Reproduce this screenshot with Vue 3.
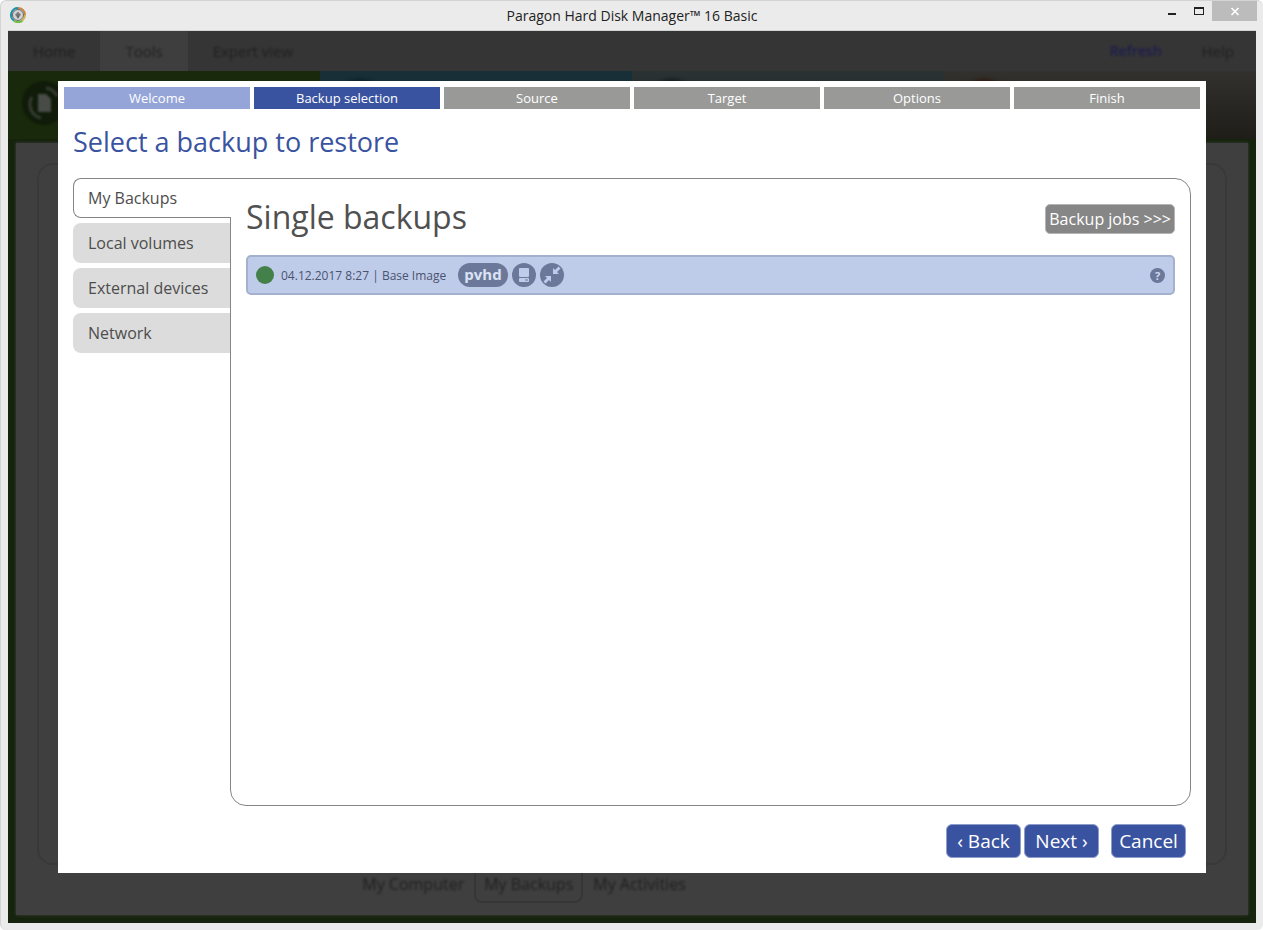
<script setup>
import { ref } from "vue";

const steps = [
	{ label: "Welcome", state: "done" },
	{ label: "Backup selection", state: "current" },
	{ label: "Source", state: "next" },
	{ label: "Target", state: "next" },
	{ label: "Options", state: "next" },
	{ label: "Finish", state: "next" },
];

const places = ["My Backups", "Local volumes", "External devices", "Network"];
const current_place = ref("My Backups");

const menu = ["Home", "Tools", "Expert view"];
const ribbon = ["green", "blue", "teal", "brown"];
const views = ["My Computer", "My Backups", "My Activities"];
</script>

<template>
	<div class="window">
		<header class="titlebar">
			<svg class="logo" viewBox="0 0 16 16" aria-hidden="true">
				<path d="M8 1A7 7 0 0 0 4 13.700" fill="none" stroke="#1c93a8" stroke-width="2" />
				<path d="M4 13.700A7 7 0 0 0 12.500 13.400" fill="none" stroke="#6dbb3a" stroke-width="2" />
				<path d="M12.500 13.400A7 7 0 0 0 15 8" fill="none" stroke="#d9b24c" stroke-width="2" />
				<path d="M15 8A7 7 0 0 0 8 1" fill="none" stroke="#c98548" stroke-width="2" />
				<circle cx="8" cy="8" r="5.500" fill="#d2d2d2" stroke="#666" stroke-width="1" />
				<path d="M8 12L5 7.500l1.500-1.500L8 4.500 9.500 6 11 7.500z" fill="#8c8c8c" />
				<path d="M8 6v5M6.500 7.500L8 10l1.500-2.500" fill="none" stroke="#666" stroke-width="1" />
			</svg>
			<h1 class="app-name">Paragon Hard Disk Manager™ 16 Basic</h1>
			<div class="controls">
				<button type="button" class="control" aria-label="Minimize">
					<svg viewBox="0 0 10 10"><path d="M1 7h8v2H1z" fill="#222" /></svg>
				</button>
				<button type="button" class="control" aria-label="Maximize">
					<svg viewBox="0 0 10 10"><path d="M0 1h10v8H0zM1 3v5h8V3z" fill="#222" fill-rule="evenodd" /></svg>
				</button>
				<button type="button" class="control close" aria-label="Close">
					<svg viewBox="0 0 10 10"><path d="M1.500 2l7 7M8.500 2l-7 7" stroke="#fff" stroke-width="1.600" /></svg>
				</button>
			</div>
		</header>

		<div class="client">
			<div class="backdrop" inert>
				<nav class="menu">
					<a v-for="item in menu" :key="item" href="#" :class="['menu-item', { open: item === 'Tools' }]"><span class="soft">{{ item }}</span></a>
					<a href="#" class="menu-item refresh"><span class="soft">Refresh</span></a>
					<a href="#" class="menu-item help"><span class="soft">Help</span></a>
				</nav>
				<div class="ribbon">
					<div v-for="color in ribbon" :key="color" :class="['ribbon-cell', color]">
						<svg v-if="color === 'green'" class="ribbon-icon" viewBox="0 0 48 48">
							<circle cx="24" cy="24" r="22" fill="#101b09" />
							<path d="M18 15h8l5 5v13H18z" fill="#484b46" />
							<path d="M12 18a14 14 0 0 0 9 21M26 9a15 15 0 0 1 11 8" fill="none" stroke="#363b32" stroke-width="3" />
						</svg>
						<span v-else class="ribbon-dot"></span>
					</div>
				</div>
				<div class="workspace">
					<div class="canvas">
						<div class="disk-frame"></div>
						<nav class="views">
							<a v-for="view in views" :key="view" href="#" :class="['view', { chosen: view === 'My Backups' }]"><span class="soft">{{ view }}</span></a>
						</nav>
					</div>
				</div>
			</div>

			<section class="wizard" role="dialog" aria-labelledby="wizard-title">
				<ol class="steps">
					<li v-for="step in steps" :key="step.label" :class="['step', step.state]">{{ step.label }}</li>
				</ol>
				<h2 id="wizard-title" class="wizard-title">Select a backup to restore</h2>

				<div class="body">
					<div class="places" role="tablist">
						<button
							v-for="place in places"
							:key="place"
							type="button"
							role="tab"
							:aria-selected="place === current_place"
							:class="['place', { active: place === current_place }]"
							@click="current_place = place"
						>{{ place }}</button>
					</div>

					<div class="panel">
						<div class="panel-head">
							<h3 class="panel-title">Single backups</h3>
							<button type="button" class="jobs">Backup jobs &gt;&gt;&gt;</button>
						</div>
						<div class="backup">
							<span class="status"></span>
							<span class="backup-name">04.12.2017 8:27 | Base Image</span>
							<span class="format">pvhd</span>
							<svg class="badge" viewBox="0 0 24 24" aria-hidden="true">
								<circle cx="12" cy="12" r="12" fill="#6b7899" />
								<rect x="7" y="5" width="10" height="9" rx="1" fill="#c0ccea" />
								<rect x="7" y="15" width="10" height="4" rx="1" fill="#c0ccea" />
								<path d="M13 17h3" stroke="#6b7899" stroke-width="1" />
							</svg>
							<svg class="badge" viewBox="0 0 24 24" aria-hidden="true">
								<circle cx="12" cy="12" r="12" fill="#6b7899" />
								<path d="M13 11V5l2 2 3.500-3.500 2 2L17 9l2 2zM11 13v6l-2-2-3.500 3.500-2-2L7 15l-2-2z" fill="#c0ccea" />
							</svg>
							<button type="button" class="info" aria-label="Backup details">?</button>
						</div>
					</div>
				</div>

				<footer class="actions">
					<button type="button" class="action">‹ Back</button>
					<button type="button" class="action">Next ›</button>
					<button type="button" class="action cancel">Cancel</button>
				</footer>
			</section>
		</div>
	</div>
</template>

<style>
body {
	margin: 0;
	background: #fff;
}
</style>

<style scoped>
* {
	box-sizing: border-box;
}

.window {
	display: flex;
	flex-direction: column;
	min-height: 100vh;
	padding: 0 7px 7px;
	background: #ebebeb;
	border-top: 1px solid #d3d3d3;
	border-left: 1px solid #d3d3d3;
	border-radius: 6px;
	font-family: "Open Sans", "Noto Sans", sans-serif;
	color: #4d4d4d;
}

button {
	margin: 0;
	padding: 0;
	border: 0;
	font-family: inherit;
	cursor: pointer;
}

a {
	color: inherit;
	text-decoration: none;
}

.titlebar {
	display: grid;
	grid-template-columns: 1fr auto 1fr;
	height: 30px;
	border-bottom: 1px solid #d3d3d3;
}

.logo {
	width: 16px;
	height: 16px;
	margin: 6px 0 0 2px;
}

.app-name {
	margin: 0;
	font-size: 14px;
	font-weight: 400;
	line-height: 29px;
	color: #222;
}

.controls {
	display: flex;
	justify-content: flex-end;
	align-items: flex-start;
	margin-right: -1px;
}

.control {
	width: 27px;
	height: 20px;
	background: none;
}

.control svg {
	display: block;
	width: 10px;
	height: 10px;
	margin: 0 auto;
}

.control.close {
	width: 45px;
	background: #bcbcbc;
}

.client {
	position: relative;
	display: flex;
	flex: 1;
	background: #16240d;
}

.backdrop {
	display: flex;
	flex: 1;
	flex-direction: column;
	font-size: 15px;
	color: #202020;
}

.soft {
	filter: blur(1px);
}

.menu {
	display: flex;
	height: 40px;
	line-height: 40px;
	background: #353535;
}

.menu-item {
	padding: 0 25px;
}

.menu-item.open {
	background: #3e3e3e;
}

.menu-item.refresh {
	margin-left: auto;
	padding: 0 15px;
	font-size: 14px;
	font-weight: 600;
	color: #1d1d50;
}

.menu-item.help {
	padding: 0 22px 0 25px;
}

.ribbon {
	display: grid;
	grid-template-columns: repeat(4, 1fr);
	height: 66px;
}

.ribbon-cell {
	padding: 8px 12px;
}

.green {
	background: #182a0b;
}

.blue {
	background: #182f37;
}

.teal {
	background: linear-gradient(#2b3233, #202525);
}

.brown {
	background: linear-gradient(#32312d, #1f1d18);
}

.ribbon-icon {
	width: 48px;
	height: 48px;
	filter: blur(1px);
}

.ribbon-dot {
	display: block;
	width: 48px;
	height: 48px;
	margin-left: 4px;
	border-radius: 50%;
	filter: blur(2px);
}

.blue .ribbon-dot {
	background: #0c1d26;
}

.teal .ribbon-dot {
	background: #101a1c;
}

.brown .ribbon-dot {
	background: #32190f;
}

.workspace {
	display: flex;
	flex: 1;
	padding: 6px 8px 8px;
}

.canvas {
	display: flex;
	flex: 1;
	flex-direction: column;
	padding: 20px 21px 12px;
	background: #3f3f3f;
	box-shadow: 0 0 3px #3f3f3f;
}

.disk-frame {
	flex: 1;
	border: 2px solid #393939;
	border-radius: 16px;
}

.views {
	display: flex;
	justify-content: center;
	height: 38px;
	margin-right: 216px;
	font-size: 16px;
	line-height: 38px;
}

.view {
	padding: 0 8px;
	border: 2px solid transparent;
	border-top: 0;
	border-radius: 0 0 8px 8px;
}

.view.chosen {
	border-color: #363636;
}

.wizard {
	position: absolute;
	inset: 50px;
	display: flex;
	flex-direction: column;
	background: #fff;
}

.steps {
	display: grid;
	grid-template-columns: repeat(6, 1fr);
	gap: 4px;
	margin: 0;
	padding: 6px 6px 0;
	list-style: none;
}

.step {
	height: 22px;
	font-size: 13px;
	line-height: 22px;
	text-align: center;
	color: #fff;
	background: #999a98;
}

.step.done {
	background: #96a5d8;
}

.step.current {
	background: #3a53a0;
}

.wizard-title {
	margin: 15px 15px 18px;
	font-size: 27px;
	font-weight: 400;
	line-height: 36px;
	color: #3a53a0;
}

.body {
	display: flex;
	flex: 1;
	padding: 0 15px;
}

.places {
	position: relative;
	display: flex;
	flex-direction: column;
	gap: 5px;
	width: 157px;
}

.place {
	height: 40px;
	padding: 0 15px;
	border-radius: 8px 0 0 8px;
	font-size: 16px;
	line-height: 40px;
	text-align: left;
	color: #4d4d4d;
	background: #dcdcdc;
}

.place.active {
	margin-right: -1px;
	padding-left: 14px;
	border: 1px solid #858585;
	border-right: 0;
	line-height: 38px;
	background: #fff;
}

.panel {
	flex: 1;
	padding: 16px 15px;
	border: 1px solid #858585;
	border-radius: 0 16px 16px 16px;
}

.panel-head {
	display: flex;
	justify-content: space-between;
	align-items: center;
	height: 48px;
}

.panel-title {
	margin: 0 0 4px;
	font-size: 32px;
	font-weight: 400;
	line-height: 44px;
	color: #505050;
}

.jobs {
	height: 30px;
	padding: 0 3px;
	border: 1px solid #b5b5b5;
	border-radius: 5px;
	font-size: 16px;
	line-height: 28px;
	color: #fff;
	background: #868686;
}

.backup {
	display: flex;
	align-items: center;
	height: 40px;
	margin-top: 12px;
	padding: 0 8px;
	border: 2px solid #a3b0ce;
	border-radius: 5px;
	background: #bfcce9;
}

.status {
	width: 18px;
	height: 18px;
	border-radius: 50%;
	background: #44814a;
}

.backup-name {
	margin: 0 12px 0 7px;
	font-size: 12px;
	color: #4a5370;
}

.format {
	height: 24px;
	padding: 0 6px;
	border-radius: 12px;
	font-size: 15px;
	font-weight: 700;
	line-height: 22px;
	color: #dbe3f5;
	background: #6b7899;
}

.badge {
	width: 24px;
	height: 24px;
	margin-left: 4px;
}

.info {
	width: 15px;
	height: 15px;
	margin-left: auto;
	border-radius: 50%;
	font-size: 11px;
	font-weight: 700;
	line-height: 15px;
	color: #cfdaf2;
	background: #6b7899;
}

.actions {
	display: flex;
	justify-content: flex-end;
	gap: 3px;
	padding: 18px 20px 15px;
}

.action {
	width: 75px;
	height: 34px;
	border: 1px solid #8f9dcb;
	border-radius: 6px;
	font-size: 19px;
	line-height: 32px;
	color: #fff;
	background: #3a53a0;
}

.action.cancel {
	margin-left: 9px;
}
</style>
